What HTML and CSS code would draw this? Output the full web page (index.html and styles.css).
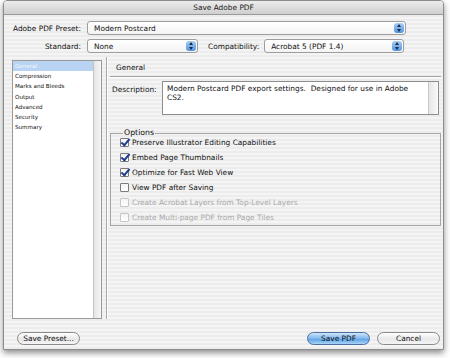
FILE: index.html
```html
<!DOCTYPE html>
<html lang="en">
<head>
  <meta charset="UTF-8" />
  <title>Save Adobe PDF</title>
  <link rel="stylesheet" href="styles.css">
</head>
<body>

  <div class="window">
    <div class="titlebar">Save Adobe PDF</div>

    <div class="content">
      <!-- Preset / standard -->
      <div class="field-row">
        <label class="field-label">Adobe PDF Preset:</label>
        <div class="popup popup-preset">
          <span>Modern Postcard</span>
          <span class="popup-arrow"></span>
        </div>
      </div>
      <div class="field-row">
        <label class="field-label">Standard:</label>
        <div class="popup popup-standard">
          <span>None</span>
          <span class="popup-arrow"></span>
        </div>
        <label class="compat-label">Compatibility:</label>
        <div class="popup popup-compat">
          <span>Acrobat 5 (PDF 1.4)</span>
          <span class="popup-arrow"></span>
        </div>
      </div>

      <!-- Main -->
      <div class="main">
        <div class="side-list">
          <ul class="list">
            <li class="selected">General</li>
            <li>Compression</li>
            <li>Marks and Bleeds</li>
            <li>Output</li>
            <li>Advanced</li>
            <li>Security</li>
            <li>Summary</li>
          </ul>
          <div class="list-scroll"></div>
        </div>

        <div class="divider"></div>

        <div class="panel">
          <div class="panel-title">General</div>
          <div class="desc-row">
            <span class="desc-label">Description:</span>
            <div class="textarea">
              <div class="textarea-text">Modern Postcard PDF export settings.&nbsp; Designed for use in Adobe CS2.</div>
              <div class="textarea-scroll"></div>
            </div>
          </div>

          <fieldset class="options">
            <legend>Options</legend>
            <div class="check-row"><span class="check checked"></span>Preserve Illustrator Editing Capabilities</div>
            <div class="check-row"><span class="check checked"></span>Embed Page Thumbnails</div>
            <div class="check-row"><span class="check checked"></span>Optimize for Fast Web View</div>
            <div class="check-row"><span class="check"></span>View PDF after Saving</div>
            <div class="check-row disabled"><span class="check"></span>Create Acrobat Layers from Top-Level Layers</div>
            <div class="check-row disabled"><span class="check"></span>Create Multi-page PDF from Page Tiles</div>
          </fieldset>
        </div>
      </div>

      <!-- Buttons -->
      <div class="buttons">
        <button class="btn">Save Preset...</button>
        <div class="buttons-right">
          <button class="btn btn-default">Save PDF</button>
          <button class="btn">Cancel</button>
        </div>
      </div>
    </div>
  </div>

</body>
</html>
```

FILE: styles.css
```css
* {
  box-sizing: border-box;
  margin: 0;
  padding: 0;
  font-family: 'DejaVu Sans', sans-serif;
}

body {
  background: #fff;
  width: 450px;
  height: 358px;
  overflow: hidden;
}

.window {
  margin-left: 3px;
  width: 441px;
  height: 350px;
  border: 1px solid #8c8c8c;
  border-radius: 4px 4px 0 0;
  box-shadow: 0 3px 6px rgba(0,0,0,0.45);
  display: flex;
  flex-direction: column;
  overflow: hidden;
}

.titlebar {
  height: 14px;
  flex: none;
  background: linear-gradient(#ececec, #cfcfcf);
  border-bottom: 1px solid #9a9a9a;
  font-size: 7.4px;
  line-height: 13px;
  text-align: center;
  color: #222;
}

.content {
  flex: 1;
  display: flex;
  flex-direction: column;
  padding: 6px 0 0 0;
  background: repeating-linear-gradient(#ececec 0, #ececec 2px, #f4f4f4 2px, #f4f4f4 4px);
  color: #111;
  font-size: 7.4px;
}

.field-row {
  display: flex;
  align-items: center;
  height: 14px;
  margin-bottom: 4px;
}

.field-label {
  width: 78px;
  padding-right: 1px;
  text-align: right;
  margin-right: 5px;
}

.popup {
  height: 14px;
  background: linear-gradient(#fff, #f4f4f4);
  border: 1px solid #9d9d9d;
  border-radius: 3px;
  display: flex;
  align-items: center;
  justify-content: space-between;
  padding: 0 1px 0 6px;
}

.popup-preset { width: 319px; }
.popup-standard { width: 111px; }
.popup-compat { width: 140px; }

.compat-label {
  margin-left: 10px;
  margin-right: 5px;
}

.popup-arrow {
  width: 10px;
  height: 10px;
  border-radius: 3px;
  background: linear-gradient(#a9cff3, #4f93e0);
  position: relative;
}

.popup-arrow::before,
.popup-arrow::after {
  content: '';
  position: absolute;
  left: 3px;
  border-left: 2px solid transparent;
  border-right: 2px solid transparent;
}

.popup-arrow::before {
  top: 1px;
  border-bottom: 3px solid #1c2c4a;
}

.popup-arrow::after {
  bottom: 1px;
  border-top: 3px solid #1c2c4a;
}

.main {
  display: flex;
  height: 259px;
  margin-top: 3px;
  padding-left: 8px;
}

.side-list {
  width: 90px;
  display: flex;
  border: 1px solid #9a9a9a;
  background: #fff;
}

.list {
  list-style: none;
  flex: 1;
  font-size: 5.6px;
}

.list li {
  height: 10.2px;
  line-height: 10px;
  padding-left: 2px;
}

.list li.selected {
  background: #b9d3f3;
  color: #f4f8ff;
}

.list-scroll {
  width: 8px;
  border-left: 1px solid #c4c4c4;
  background: linear-gradient(90deg, #e4e4e4, #f6f6f6);
}

.divider {
  width: 2px;
  margin: -3px 2px 0 4px;
  border-left: 1px solid #a8a8a8;
  border-right: 1px solid #fff;
}

.panel {
  width: 331px;
  display: flex;
  flex-direction: column;
}

.panel-title {
  height: 17px;
  line-height: 15px;
  padding-left: 6px;
  border-bottom: 1px solid #a4a4a4;
  box-shadow: 0 1px 0 #fff;
}

.desc-row {
  display: flex;
  margin-top: 4px;
}

.desc-label {
  width: 52px;
  padding-left: 2px;
  padding-top: 4px;
}

.textarea {
  width: 277px;
  height: 34px;
  background: #fff;
  border: 1px solid #8d8d8d;
  display: flex;
}

.textarea-text {
  flex: 1;
  padding: 2px 14px 0 4px;
  line-height: 9px;
}

.textarea-scroll {
  width: 10px;
  border-left: 1px solid #c8c8c8;
  background: linear-gradient(90deg, #e6e6e6, #fafafa);
}

.options {
  margin-top: 15px;
  border: 1px solid #a6a6a6;
  height: 96px;
  padding: 0 0 0 9px;
}

.options legend {
  margin-left: 3px;
  padding: 0 1px;
  font-size: 7.8px;
  line-height: 6px;
}

.check-row {
  display: flex;
  align-items: center;
  height: 15px;
  font-size: 7.4px;
}

.check-row:first-of-type {
  margin-top: -1px;
}

.check {
  width: 9px;
  height: 9px;
  margin-right: 3px;
  border: 1px solid #7b7b7b;
  border-radius: 1px;
  background: linear-gradient(#f4f4f4, #fff);
  position: relative;
}

.check.checked::after {
  content: '';
  position: absolute;
  left: 2px;
  top: -2px;
  width: 3px;
  height: 7px;
  border-right: 2px solid #1f3e8c;
  border-bottom: 2px solid #1f3e8c;
  transform: rotate(40deg);
}

.check-row.disabled {
  color: #a9a9a9;
}

.check-row.disabled .check {
  border-color: #c6c6c6;
}

.buttons {
  margin-top: 13px;
  display: flex;
  justify-content: space-between;
  padding: 0 3px 0 13px;
}

.buttons-right {
  display: flex;
  gap: 7px;
}

.btn {
  height: 13px;
  width: 63px;
  border: 1px solid #8a8a8a;
  border-radius: 7px;
  background: linear-gradient(#ffffff, #e8e8e8 55%, #f4f4f4);
  font-size: 7.4px;
  color: #111;
}

.btn-default {
  border-color: #4b6f9f;
  background: linear-gradient(#cfe6fb, #7fb6ee 50%, #5ea2e8 55%, #a7d3f6);
}
```
